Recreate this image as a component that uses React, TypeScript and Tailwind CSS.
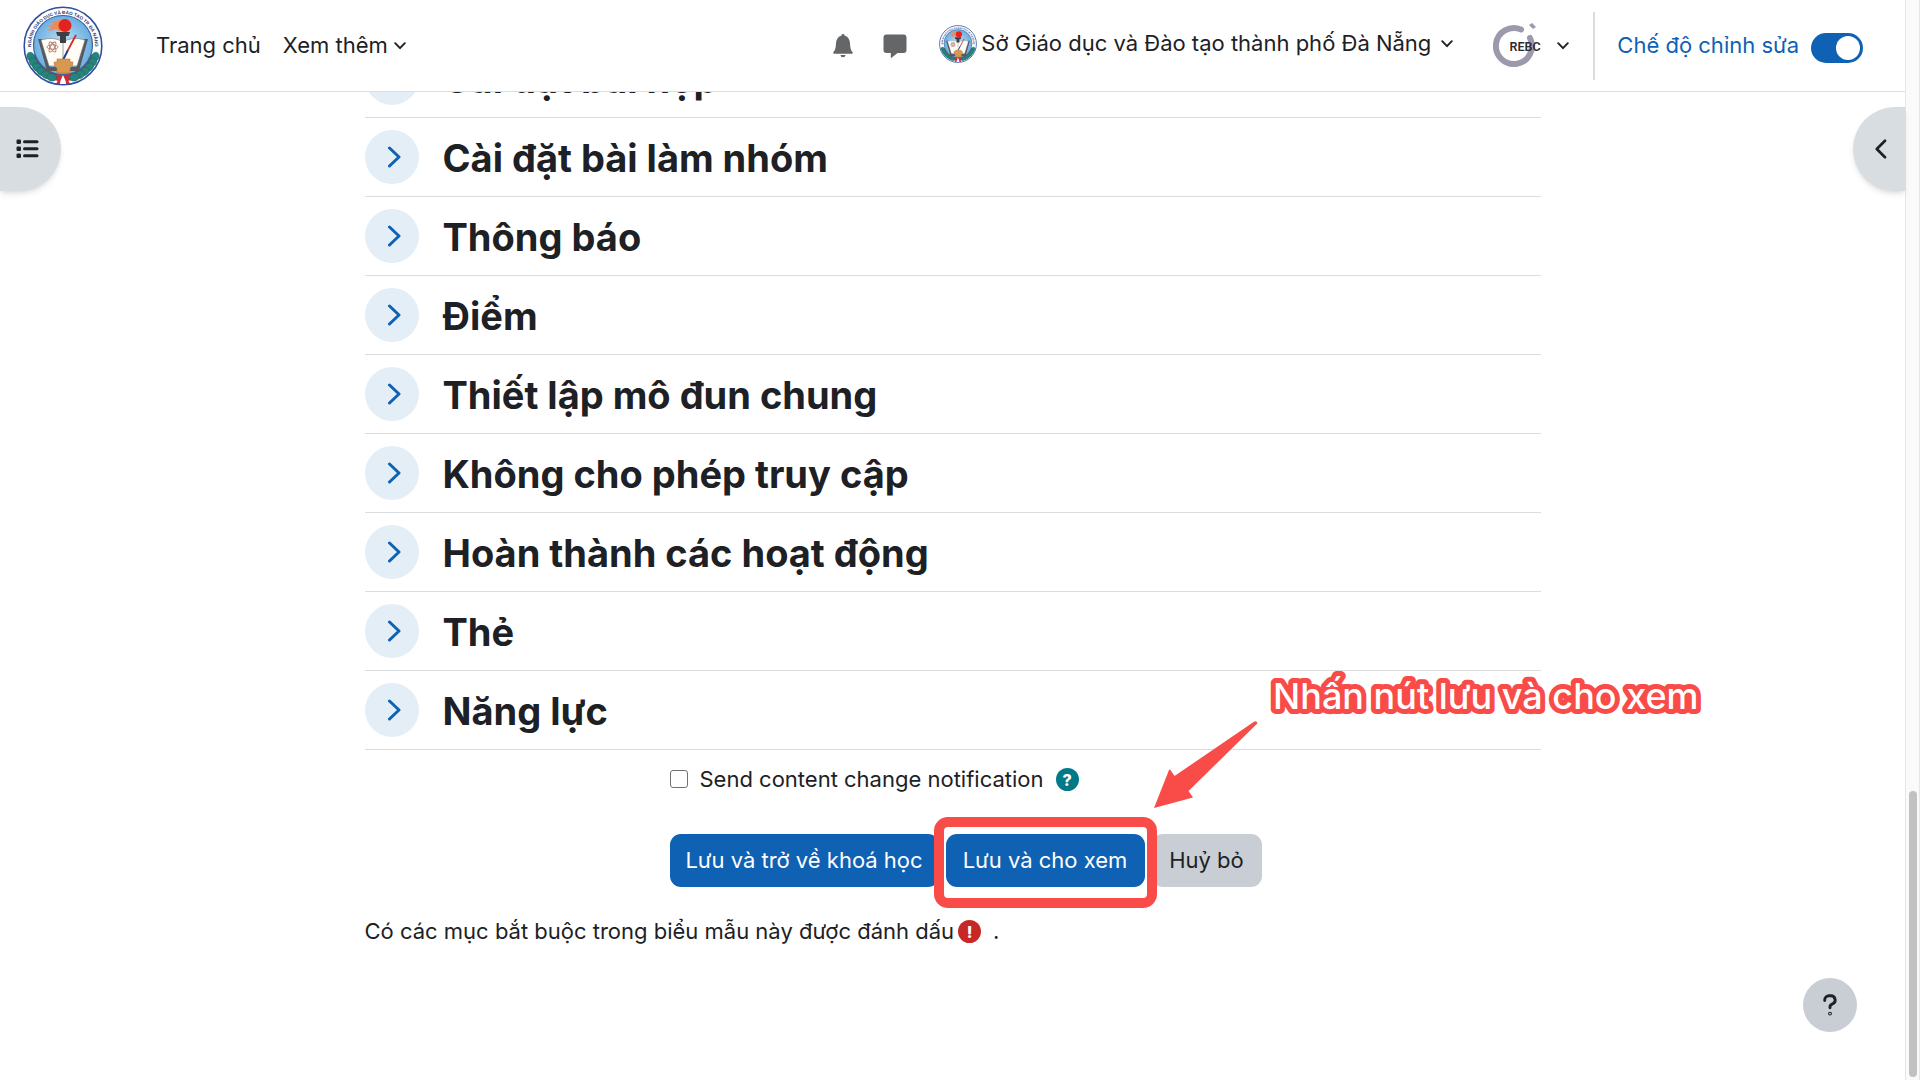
import { useState } from "react";

const sections = [
  "Cài đặt bài nộp",
  "Cài đặt bài làm nhóm",
  "Thông báo",
  "Điểm",
  "Thiết lập mô đun chung",
  "Không cho phép truy cập",
  "Hoàn thành các hoạt động",
  "Thẻ",
  "Năng lực",
];

function Chevron({ className }: { className?: string }) {
  return (
    <svg viewBox="0 0 12 8" className={className} fill="none" stroke="currentColor" strokeWidth="1.9" strokeLinecap="round" strokeLinejoin="round">
      <path d="M1.2 1.2 6 6.2l4.8-5" />
    </svg>
  );
}

function SchoolLogo({ className, id }: { className?: string; id: string }) {
  const leaves = [0, 1, 2, 3, 4, 5];
  return (
    <svg viewBox="0 0 80 80" className={className} aria-hidden="true">
      <defs>
        <radialGradient id={`${id}-sky`} cx="0.5" cy="0.5" r="0.6">
          <stop offset="0" stopColor="#c4e4f6" />
          <stop offset="1" stopColor="#5aa3dc" />
        </radialGradient>
        <path id={`${id}-arc`} d="M9.6 50 A32 32 0 1 1 70.4 50" />
      </defs>
      <circle cx="40" cy="40" r="38.8" fill="#fff" stroke="#2f4fa0" strokeWidth="1.6" />
      <path d="M6 50 A35.500 35.500 0 0 0 74 50 L66 48 A27 27 0 0 1 14 48Z" fill="#c9303c" />
      <circle cx="40" cy="39" r="29.5" fill={`url(#${id}-sky)`} stroke="#3563a8" strokeWidth="1.2" />
      <text fontSize="4.6" fontWeight="700" fill="#2a2f6b" fontFamily="Liberation Sans, sans-serif">
        <textPath href={`#${id}-arc`} startOffset="50%" textAnchor="middle">
          NGÀNH GIÁO DỤC VÀ ĐÀO TẠO TP. ĐÀ NẴNG
        </textPath>
      </text>
      <path d="M15 33h4l8 28h26l8-28h4L56 65H24Z" fill="#555a5e" />
      <path d="M18 34q13-4 22 2q9-6 22-2L54 60q-8-1-14 3q-6-4-14-3Z" fill="#fffdf6" stroke="#777" strokeWidth="0.6" />
      <path d="M40 36v26" stroke="#888" strokeWidth="0.8" />
      <g fill="none" stroke="#b27a6c" strokeWidth="0.9">
        <ellipse cx="29.5" cy="41" rx="5.5" ry="2.2" />
        <ellipse cx="29.5" cy="41" rx="5.5" ry="2.2" transform="rotate(60 29.5 41)" />
        <ellipse cx="29.5" cy="41" rx="5.5" ry="2.2" transform="rotate(120 29.5 41)" />
      </g>
      <path d="M33 26h14l-1.500 4h-2.500v7h-6v-7h-2.500Z" fill="#3d3f42" />
      <path d="M36 25q-3-3-6-1q-3 1-6 0q4-1 5-3q-3 0-5-1q5 0 7-3q-3 0-4-2q5 1 9-1q10-3 11 4q0 5-5 7Z" fill="#ee8a5a" />
      <circle cx="42" cy="19.500" r="6.500" fill="#e2231f" />
      <path d="M53 29 45 44" stroke="#cf2c33" strokeWidth="1.800" />
      <path d="M45 44 40 54" stroke="#223e92" strokeWidth="2" />
      <path d="M34 53h13v3h3q0 5-3 6v5H34v-5q-3-1-3-6h3Z" fill="#d9984f" stroke="#b8783a" strokeWidth="0.600" />
      {leaves.map((i) => (
        <g key={i} fill="#25857c" stroke="#14655e" strokeWidth="0.500">
          <ellipse cx="8" cy="51" rx="5" ry="3.800" transform={`rotate(${-i * 10} 40 39) rotate(60 8 51)`} />
          <ellipse cx="72" cy="51" rx="5" ry="3.800" transform={`rotate(${i * 10} 40 39) rotate(-60 72 51)`} />
        </g>
      ))}
      <path d="M40 69l4 9h-8Z" fill="#fff" />
      <path d="M38 68l-5 10h4Z M42 68l5 10h-4Z" fill="#d62832" />
    </svg>
  );
}

function UserAvatar() {
  return (
    <svg viewBox="0 0 52 52" className="h-13 w-13" aria-hidden="true">
      <path d="M28 9.500A18 18 0 1 0 37 18" fill="none" stroke="#9b99ab" strokeWidth="6" strokeLinecap="round" />
      <path d="M36 5l3-2 4 4-3 2Z" fill="#9b99ab" />
      <text x="16.500" y="30.500" fontSize="12.500" fontWeight="600" fill="#2d2d33" fontFamily="Roboto, sans-serif">REBC</text>
    </svg>
  );
}

function Header() {
  const [editing, setEditing] = useState(true);
  return (
    <header className="flex h-[92px] shrink-0 items-center border-b border-[#dbdddf] bg-white pr-[42px] pl-[23px]">
      <a href="#" aria-label="Trang chủ" className="mr-[53px]">
        <SchoolLogo id="brand" className="h-20 w-20" />
      </a>
      <nav className="flex items-center gap-[22px]">
        <a href="#">Trang chủ</a>
        <button className="flex items-center gap-1.5">
          Xem thêm
          <Chevron className="h-2 w-3" />
        </button>
      </nav>
      <div className="ml-auto flex items-center">
        <button aria-label="Thông báo" className="mr-[30px]">
          <svg viewBox="0 0 20 24" className="h-6 w-5" fill="#646668">
            <path d="M10 0a1.400 1.400 0 0 1 1.400 1.600C15 2.600 16.700 5.500 17 9c.2 5 .8 7.300 2.700 9.200.5.800 0 1.500-.7 1.500H1c-.7 0-1.200-.7-.7-1.500C2.200 16.300 2.800 14 3 9c.3-3.500 2-6.400 5.600-7.400A1.400 1.400 0 0 1 10 0ZM7.500 21h5a2.500 2.300 0 0 1-5 0Z" />
          </svg>
        </button>
        <button aria-label="Tin nhắn" className="mr-8">
          <svg viewBox="0 0 24 24" className="h-6 w-6" fill="#646668">
            <path d="M3.500.5h17A3 3 0 0 1 23.500 3.500v12.500a3 3 0 0 1-3 3h-6L8.600 23.700c-.4.300-.8.100-.8-.4V19H3.500a3 3 0 0 1-3-3V3.500a3 3 0 0 1 3-3Z" />
          </svg>
        </button>
        <button className="flex items-center pb-1">
          <SchoolLogo id="site" className="mr-1 h-[38px] w-[38px]" />
          Sở Giáo dục và Đào tạo thành phố Đà Nẵng
          <Chevron className="ml-2.5 h-2 w-3" />
        </button>
        <button aria-label="Menu người dùng" className="ml-10 flex items-center gap-3">
          <UserAvatar />
          <Chevron className="h-2 w-3" />
        </button>
        <div className="mr-[22px] ml-6 h-[68px] w-0.5 bg-[#d8dde1]" />
        <label className="flex cursor-pointer items-center gap-3 text-[#0f61b3]">
          Chế độ chỉnh sửa
          <input
            type="checkbox"
            role="switch"
            checked={editing}
            onChange={() => setEditing(!editing)}
            className="mt-1 flex h-[30px] w-[52px] appearance-none items-center rounded-full bg-gray-400 p-[3px] before:h-6 before:w-6 before:rounded-full before:bg-white checked:justify-end checked:bg-[#0f61b3]"
          />
        </label>
      </div>
    </header>
  );
}

function Section({ title }: { title: string }) {
  return (
    <div className="flex h-[79px] items-center gap-6 border-b border-[#d8dde1]">
      <button aria-label={title} className="flex h-[54px] w-[54px] items-center justify-center rounded-full bg-[#e3eef7] pl-1 text-[#0f61b3]">
        <svg viewBox="0 0 14 22" className="h-[22px] w-3.5" fill="none" stroke="currentColor" strokeWidth="3" strokeLinecap="round" strokeLinejoin="round">
          <path d="M2.500 2l9.500 9-9.500 9" />
        </svg>
      </button>
      <h3 className="pt-0.5 text-[38px] leading-[48px] font-bold">{title}</h3>
    </div>
  );
}

function Callout() {
  return (
    <>
      <div className="pointer-events-none absolute -top-[17px] -right-3 -bottom-[21px] -left-3 rounded-[14px] border-[10px] border-[#f94b48]" />
      <svg viewBox="0 0 104 90" className="pointer-events-none absolute -top-[114px] left-[208px] h-[90px] w-[104px]" fill="#f94b48">
        <path d="M100 1.800q2.500-1.500 3.500 1.500L34.500 71l4.500 6.500L0 88 15 50q1-.8 1.500 0l4 6Z" />
      </svg>
      <svg className="pointer-events-none absolute -top-[164px] left-[322px] h-[52px] w-[450px] overflow-visible">
        <text x="5" y="39" className="fill-white stroke-[#f94b48] stroke-[10px] text-[36px] font-medium [paint-order:stroke]" strokeLinejoin="round">
          Nhấn nút lưu và cho xem
        </text>
      </svg>
    </>
  );
}

export default function App() {
  return (
    <div className="flex h-screen overflow-hidden bg-white font-[Inter,sans-serif] text-[22px] leading-[33px] text-[#1d2125]">
      <div className="relative flex min-w-0 flex-1 flex-col">
        <Header />
        <main className="flex min-h-0 flex-1 flex-col overflow-hidden">
          <form className="mx-auto -mt-[53px] w-full max-w-[1176px]" onSubmit={(e) => e.preventDefault()}>
            {sections.map((title) => (
              <Section key={title} title={title} />
            ))}
            <div className="pl-[305px]">
              <div className="flex items-center pt-[13px]">
                <input
                  id="notify"
                  type="checkbox"
                  className="mr-3 mb-0.5 h-[18px] w-[18px] appearance-none rounded-[3px] border border-[#6f7173] bg-white checked:bg-[#0f61b3]"
                />
                <label htmlFor="notify">Send content change notification</label>
                <button type="button" aria-label="Trợ giúp" className="ml-3 flex h-[23px] w-[23px] items-center justify-center rounded-full bg-[#007a88] text-base font-extrabold text-white">
                  ?
                </button>
              </div>
              <div className="flex gap-[7px] pt-[38px] whitespace-nowrap">
                <button className="h-[53px] w-[269px] rounded-[11px] bg-[#0f61b3] text-white">Lưu và trở về khoá học</button>
                <div className="relative">
                  <button className="h-[53px] w-[199px] rounded-[11px] bg-[#0f61b3] text-white">Lưu và cho xem</button>
                  <Callout />
                </div>
                <button type="button" className="h-[53px] w-[110px] rounded-[11px] bg-[#c8ced4]">Huỷ bỏ</button>
              </div>
            </div>
            <p className="flex items-center pt-[28px]">
              Có các mục bắt buộc trong biểu mẫu này được đánh dấu
              <span className="mr-3 ml-1 flex h-[23px] w-[23px] items-center justify-center rounded-full bg-[#c82825] text-base font-extrabold text-white">!</span>
              .
            </p>
          </form>
        </main>
        <button aria-label="Mở mục lục" className="absolute top-[107px] left-0 flex h-[84px] w-[61px] items-center rounded-r-[42px] bg-[#d8dde1] pl-4 shadow-md">
          <svg viewBox="0 0 24 20" className="h-5 w-6" fill="#1d2125">
            <rect x="0.500" y="0.500" width="4.500" height="4.500" rx="1.300" />
            <rect x="0.500" y="7.500" width="4.500" height="4.500" rx="1.300" />
            <rect x="0.500" y="14.500" width="4.500" height="4.500" rx="1.300" />
            <rect x="7" y="1.300" width="15.500" height="3" rx="1.500" />
            <rect x="7" y="8.300" width="15.500" height="3" rx="1.500" />
            <rect x="7" y="15.300" width="15.500" height="3" rx="1.500" />
          </svg>
        </button>
        <button aria-label="Mở ngăn khối" className="absolute top-[107px] right-0 flex h-[84px] w-[52px] items-center rounded-l-[42px] bg-[#d8dde1] pl-[21px] shadow-md">
          <svg viewBox="0 0 13 20" className="h-5 w-[13px]" fill="none" stroke="#1d2125" strokeWidth="2.700" strokeLinecap="round" strokeLinejoin="round">
            <path d="M11 1.800 2.800 10 11 18.200" />
          </svg>
        </button>
        <button aria-label="Trợ giúp" className="absolute right-12 bottom-12 flex h-[54px] w-[54px] items-center justify-center rounded-full bg-[#c8ced4]">
          <svg viewBox="0 0 14 22" className="h-[22px] w-3.5" fill="none" stroke="#1d2125" strokeWidth="2.900" strokeLinecap="round" strokeLinejoin="round">
            <path d="M1.700 6.500V6A4.300 4.300 0 0 1 6 1.800h2A4.200 4.200 0 0 1 9.700 9.800L7.800 11Q7 11.600 7 12.600v1.200" />
            <circle cx="7" cy="19.600" r="0.500" />
          </svg>
        </button>
      </div>
      <div className="flex w-[15px] shrink-0 flex-col justify-end border-x border-[#e6e6e6] bg-[#fafafa] pb-[3px] pl-[3px]">
        <div className="h-[286px] w-2 rounded-full bg-[#c1c1c1]" />
      </div>
    </div>
  );
}
